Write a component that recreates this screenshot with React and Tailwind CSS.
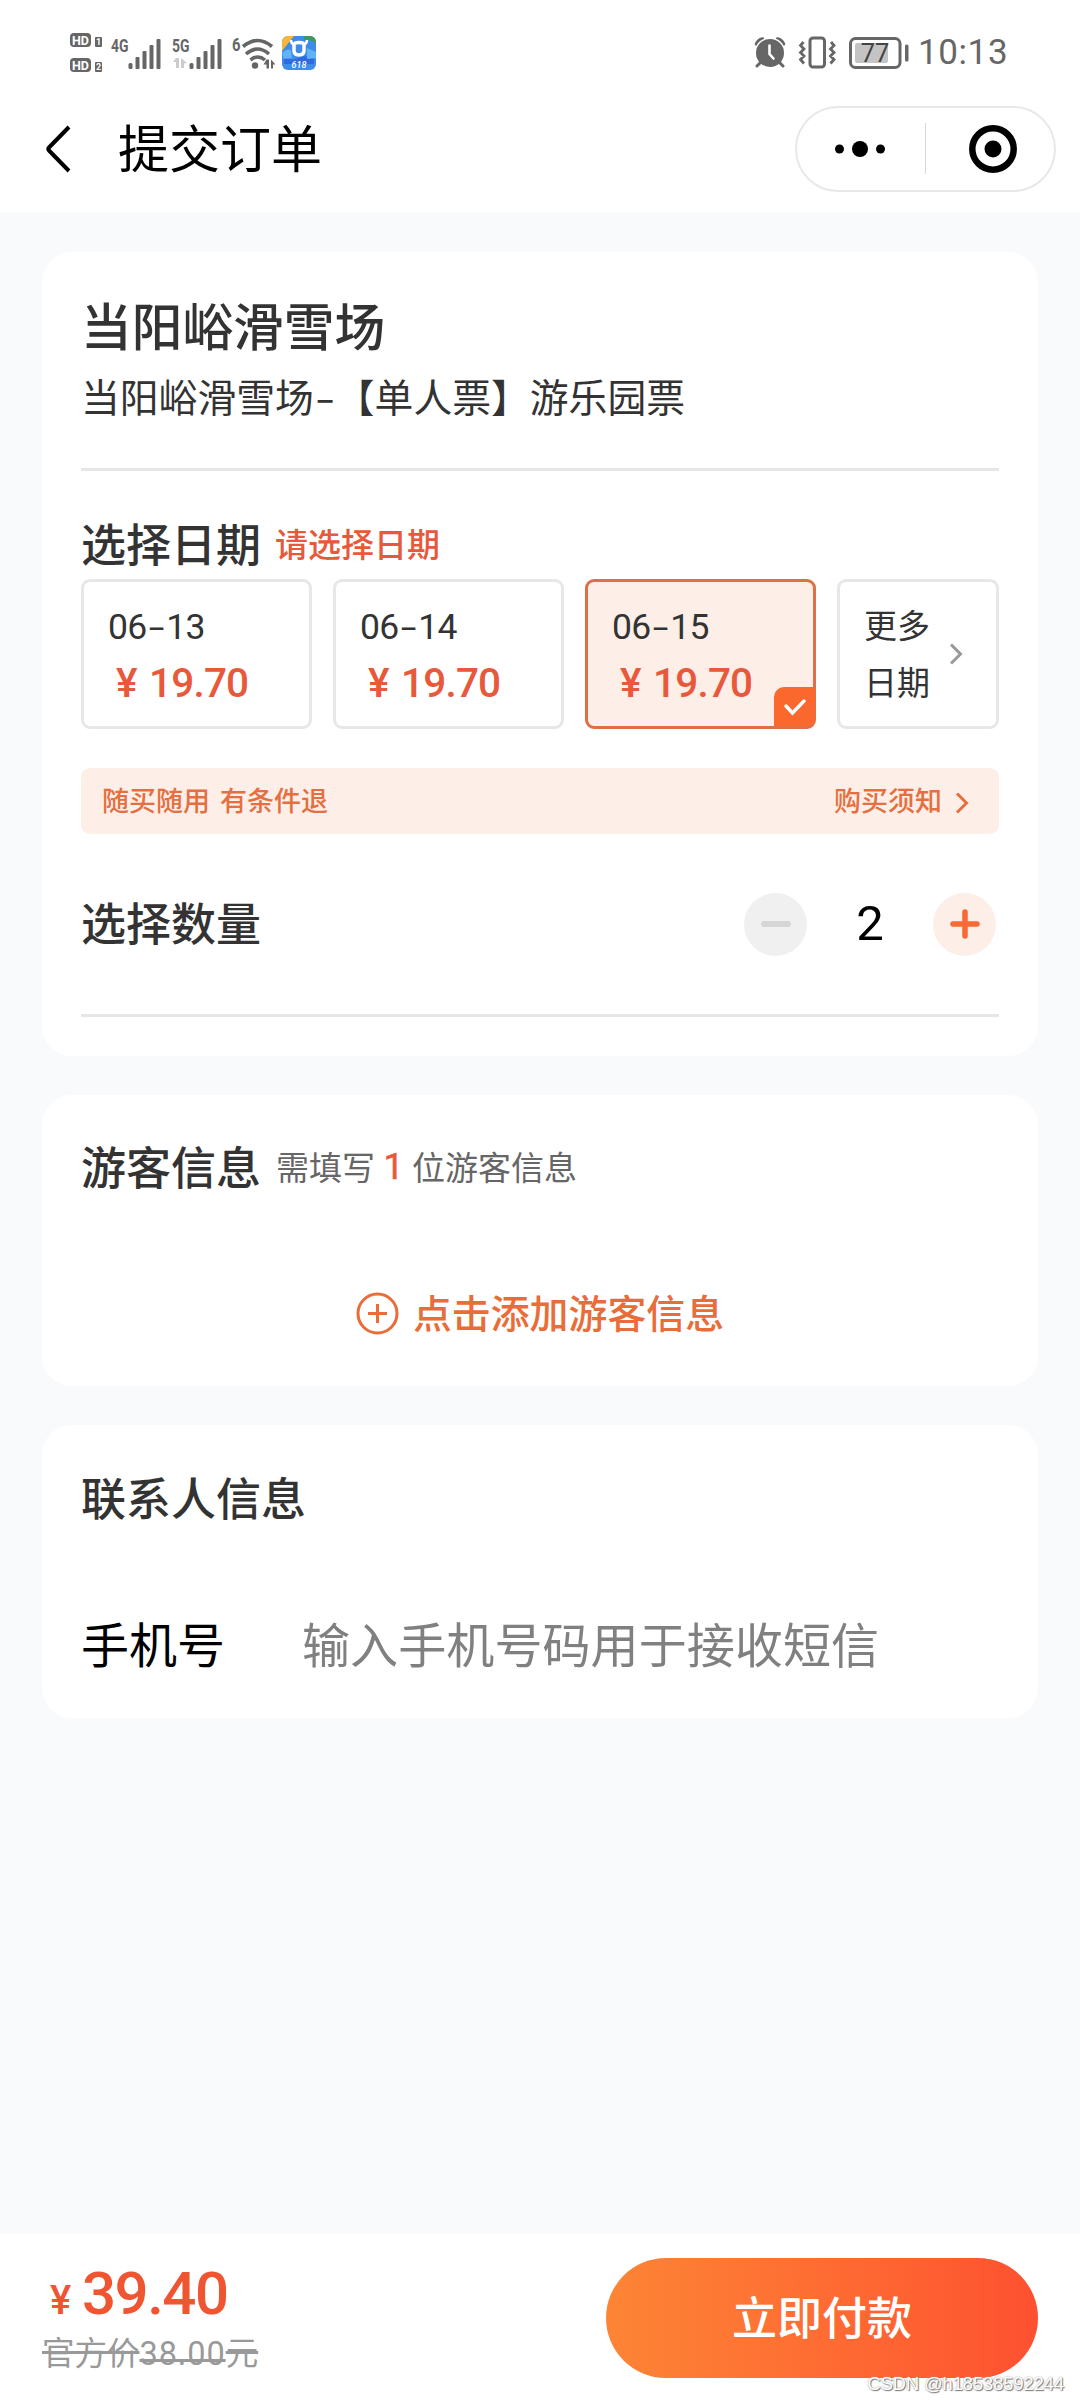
import { useState } from "react"

const dates = [
  { month: "06", day: "13", price: "19.70" },
  { month: "06", day: "14", price: "19.70" },
  { month: "06", day: "15", price: "19.70" },
]

function HdBadge({ n }) {
  return (
    <svg className="overflow-visible" width="32" height="14" viewBox="0 0 32 14">
      <rect width="21" height="14" rx="4" fill="#666" />
      <text x="10.5" y="11.5" fontSize="12.5" fontWeight="700" fill="#fff" textAnchor="middle" fontFamily="Roboto">HD</text>
      <rect x="25" y="4" width="7" height="10" rx="1" fill="#666" />
      <text x="28.5" y="12.2" fontSize="9" fontWeight="700" fill="#fff" textAnchor="middle" fontFamily="Roboto">{n}</text>
    </svg>
  )
}

function Signal({ label, arrows }) {
  return (
    <svg className="overflow-visible" width="51" height="32" viewBox="0 0 51 32" fill="#666">
      <text x="0" y="14.5" fontSize="18.5" fontWeight="700" textLength="17.5" lengthAdjust="spacingAndGlyphs" fontFamily="Roboto">{label}</text>
      {arrows && <path d="M4 21h3v10H4v-6H1zM9 21l6 5-3 .5V31H9z" fill="#ccc" />}
      <rect x="17.5" y="26" width="4" height="6" rx="1.5" />
      <rect x="24.5" y="20" width="4" height="12" rx="1" />
      <rect x="31.5" y="14" width="4" height="18" rx="1" />
      <rect x="38.5" y="8" width="4" height="24" rx="1" />
      <rect x="45.5" y="2" width="4" height="30" rx="1" />
    </svg>
  )
}

function Wifi() {
  return (
    <svg className="overflow-visible" width="44" height="34" viewBox="0 0 44 34" fill="none" stroke="#666" strokeWidth="3.6">
      <text x="0" y="14.5" fontSize="18.5" fontWeight="700" fill="#666" stroke="none" textLength="8.5" lengthAdjust="spacingAndGlyphs" fontFamily="Roboto">6</text>
      <path d="M11 10.500q14.500-12 29 0M14 18q11.500-10 23 0M18.500 24q7.500-6 14.500 0" />
      <circle cx="23" cy="29.500" r="3.200" fill="#666" stroke="none" />
      <path d="M34.500 23.500h2.500v9h-2.500v-4h-3zM39 23.500l4.500 5h-2.500v4h-2z" fill="#666" stroke="none" />
    </svg>
  )
}

function AppBadge() {
  return (
    <svg width="34" height="34" viewBox="0 0 34 34">
      <defs>
        <clipPath id="app"><rect width="34" height="34" rx="6" /></clipPath>
      </defs>
      <g clipPath="url(#app)">
        <rect width="34" height="34" fill="#3e8bea" />
        <path d="M0 0h12L0 15z" fill="#f6b63c" />
        <path d="M22 0h12v8q-6-6-12-4z" fill="#3c9a5b" />
        <path d="M2 20q6 6 14 2t16 1v5H2z" fill="#3268df" />
        <path d="M0 17q5-5 9-3l1 8-8 1zM25 12l9 4v6l-9 1z" fill="#5fb4f6" />
        <path d="M12 9q0-2.500 5-2.500t5 2.500v5.500q0 4.500-5 4.500t-5-4.500z" fill="none" stroke="#fff" strokeWidth="3.500" />
        <path d="M9 4q0 4 3 4M25 4q0 4-3 4" fill="none" stroke="#fff" strokeWidth="2.500" />
        <text x="17" y="32" fontSize="9" fontStyle="italic" fontWeight="500" fill="#fff" textAnchor="middle" fontFamily="Roboto">618</text>
      </g>
    </svg>
  )
}

function AlarmClock() {
  return (
    <svg width="32" height="31" viewBox="0 0 32 31" fill="none" stroke="#666" strokeLinecap="round">
      <path d="M2.500 7q1.500-4 6-5M23.500 2q4.500 1 6 5" strokeWidth="3.500" />
      <circle cx="16" cy="16" r="15.500" fill="#fff" stroke="none" />
      <circle cx="16" cy="16" r="14" fill="#666" stroke="none" />
      <path d="M7 25l-4 4M25 25l4 4" strokeWidth="3" />
      <path d="M15.500 8.500v8.500l4 4.500" stroke="#fff" strokeWidth="2.600" />
    </svg>
  )
}

function Vibrate() {
  return (
    <svg width="38" height="33" viewBox="0 0 38 33" fill="none" stroke="#666" strokeWidth="3">
      <rect x="12" y="2" width="14.500" height="29" rx="3" />
      <path d="M5.500 6l-3 3.500 3.500 3.500-3.500 3.500 3.500 3.500-3.500 3.500 3.500 4M33 6l3 3.500-3.500 3.500 3.500 3.500-3.500 3.500 3.500 3.500-3.500 4" strokeWidth="2.800" />
    </svg>
  )
}

function Battery() {
  return (
    <svg width="60" height="32" viewBox="0 0 60 32">
      <rect x="1.500" y="1.500" width="49.500" height="29" rx="5" fill="none" stroke="#666" strokeWidth="3" />
      <rect x="6" y="6" width="33" height="20" rx="2" fill="#c4c4c4" />
      <rect x="56" y="7.500" width="3.500" height="17" rx="1.500" fill="#666" />
      <text x="26" y="25" fontSize="25.500" fill="#444" textAnchor="middle" fontFamily="Roboto">77</text>
    </svg>
  )
}

function Chevron({ className }) {
  return (
    <svg className={className} width="14" height="22" viewBox="0 0 14 22" fill="none" stroke="currentColor" strokeWidth="3">
      <path d="M2 1.500l9.500 9.500L2 20.500" />
    </svg>
  )
}

function StatusBar() {
  return (
    <div className="flex h-[105px] items-center pl-[70px] pr-[73px]">
      <div className="flex flex-col gap-[11px]">
        <HdBadge n="1" />
        <HdBadge n="2" />
      </div>
      <div className="ml-[9px]"><Signal label="4G" /></div>
      <div className="ml-[10px]"><Signal label="5G" arrows /></div>
      <div className="ml-[9px]"><Wifi /></div>
      <div className="ml-[6px]"><AppBadge /></div>
      <div className="ml-auto flex items-center">
        <AlarmClock />
        <div className="ml-[12px]"><Vibrate /></div>
        <div className="ml-[13px]"><Battery /></div>
        <span className="ml-[9px] w-[89px] whitespace-nowrap font-['Roboto',sans-serif] text-[35px] leading-[40px] tracking-[0.6px] text-[#666]">10:13</span>
      </div>
    </div>
  )
}

function NavBar() {
  return (
    <div className="flex h-[87px] items-center pl-[44px] pr-[24px]">
      <svg width="28" height="48" viewBox="0 0 28 48" fill="none" stroke="#000" strokeWidth="4">
        <path d="M25 2L5 22.500q-1.500 1.500 0 3L25 46" />
      </svg>
      <h1 className="mb-[6px] ml-[46px] text-[51px] leading-[60px] text-black">提交订单</h1>
      <div className="ml-auto flex h-[86px] w-[261px] items-center rounded-full border-2 border-[#e8e8e8]">
        <svg className="ml-[38px]" width="50" height="16" viewBox="0 0 50 16">
          <circle cx="4.500" cy="8" r="4.500" />
          <circle cx="25" cy="8" r="8" />
          <circle cx="45.500" cy="8" r="4.500" />
        </svg>
        <div className="ml-[40px] h-[51px] w-px bg-[#d8d8d8]" />
        <svg className="ml-[43px]" width="48" height="48" viewBox="0 0 48 48">
          <circle cx="24" cy="24" r="20.700" fill="none" stroke="#000" strokeWidth="6.500" />
          <circle cx="24" cy="24" r="8.500" />
        </svg>
      </div>
    </div>
  )
}

function DateCard({ month, day, price, active, onClick }) {
  return (
    <button
      onClick={onClick}
      className={
        active
          ? "relative h-[150px] w-[231px] rounded-[9px] border-3 border-[#dd7044] bg-[#fdeee8] pl-[24px] pt-[2px] text-left"
          : "relative h-[150px] w-[231px] rounded-[9px] border-3 border-[#e7e7e7] bg-white pl-[24px] pt-[2px] text-left"
      }
    >
      <div className="font-['Roboto',sans-serif] text-[35.5px] leading-[56px] tracking-[-0.8px] text-[#333]">
        {month}
        <span className="mx-[1px] inline-block w-[18px] scale-x-160 text-center">-</span>
        {day}
      </div>
      <div className="flex pl-[8px] font-['Roboto',sans-serif] text-[40.5px] font-medium leading-[57px] tracking-[-0.8px] text-[#e8583a]">
        <span className="w-[33px]">¥</span>
        <span>{price}</span>
      </div>
      {active && (
        <div className="absolute -right-[2px] bottom-0 flex h-[39px] w-[41px] items-center justify-center rounded-br-[6px] rounded-tl-[10px] bg-[#fb682e]">
          <svg width="24" height="18" viewBox="0 0 24 18" fill="none" stroke="#fff" strokeWidth="3.500" strokeLinecap="round">
            <path d="M3 8l6.500 7L21 3" />
          </svg>
        </div>
      )}
    </button>
  )
}

export default function App() {
  const [selected, setSelected] = useState("15")
  const [count, setCount] = useState(2)

  return (
    <main className="relative flex h-[2400px] w-[1080px] flex-col bg-[#f8fafc] font-['Noto_Sans_CJK_SC',sans-serif] text-[#333]">
      <header className="h-[212px] bg-white">
        <StatusBar />
        <NavBar />
      </header>

      <div className="flex flex-col gap-[39px] px-[42px] pt-[40px]">
        {/* Ticket */}
        <section className="h-[804px] rounded-[30px] bg-white px-[39px] pt-[42px]">
          <h2 className="text-[50.7px] font-medium leading-[60px]">当阳峪滑雪场</h2>
          <p className="mt-[16px] whitespace-nowrap text-[38.8px] leading-[50px]">
            当阳峪滑雪场<span className="inline-block w-[22px] scale-x-150 text-center">-</span>【单人票】游乐园票
          </p>
          <div className="mt-[48px] h-[3px] bg-[#e6e6e6]" />

          <div className="mt-[42px] flex h-[60px] items-center">
            <h3 className="text-[45px] font-medium leading-[60px]">选择日期</h3>
            <span className="ml-[14px] text-[33px] font-medium leading-[60px] text-[#e8583a]">请选择日期</span>
          </div>
          <div className="mt-[6px] flex gap-[21px]">
            {dates.map((d) => (
              <DateCard key={d.day} {...d} active={d.day === selected} onClick={() => setSelected(d.day)} />
            ))}
            <button className="flex h-[150px] w-[162px] items-center rounded-[9px] border-3 border-[#e7e7e7] pl-[24px]">
              <span className="mb-[2px] w-[66px] text-[33px] leading-[57px]">更多日期</span>
              <Chevron className="ml-[19px] text-[#999]" />
            </button>
          </div>

          <div className="mt-[39px] flex h-[66px] items-center rounded-[9px] bg-[#fdeee8] pl-[21px] pr-[30px] text-[27px] font-medium leading-[60px] text-[#e56f3f]">
            <span className="mb-[3px] [word-spacing:4px]">随买随用 有条件退</span>
            <span className="mb-[3px] ml-auto">购买须知</span>
            <Chevron className="ml-[13px] mt-[3px]" />
          </div>

          <div className="mt-[58px] flex h-[64px] items-center">
            <h3 className="mb-[4px] text-[45px] font-medium leading-[60px]">选择数量</h3>
            <button onClick={() => setCount(Math.max(1, count - 1))} className="ml-auto flex h-[63px] w-[63px] items-center justify-center rounded-full bg-[#f0f0f0]">
              <span className="h-[6px] w-[30px] rounded-full bg-[#d6d6d6]" />
            </button>
            <span className="w-[126px] text-center font-['Roboto',sans-serif] text-[49px] leading-[60px] text-black">{count}</span>
            <button onClick={() => setCount(count + 1)} className="mr-[3px] flex h-[63px] w-[63px] items-center justify-center rounded-full bg-[#fdeee8]">
              <svg width="30" height="30" viewBox="0 0 30 30" stroke="#f66a35" strokeWidth="5.500" strokeLinecap="round">
                <path d="M3 15h24M15 3v24" />
              </svg>
            </button>
          </div>
          <div className="mt-[58px] h-[3px] bg-[#e6e6e6]" />
        </section>

        {/* Visitors */}
        <section className="h-[291px] rounded-[30px] bg-white px-[39px] pt-[41px]">
          <div className="flex h-[60px] items-center">
            <h3 className="text-[45px] font-medium leading-[60px]">游客信息</h3>
            <div className="ml-[15px] flex text-[33px] leading-[62px] text-[#666]">
              <span>需填写</span>
              <span className="w-[37px] pt-px text-center font-['Roboto',sans-serif] text-[36px] text-[#e8583a] [-webkit-text-stroke:0.5px_#e8583a]">1</span>
              <span>位游客信息</span>
            </div>
          </div>
          <button className="mx-auto mt-[85px] flex h-[60px] items-center justify-center text-[38.9px] font-medium leading-[60px] text-[#e96d38]">
            <svg className="mr-[14px] mt-[5px]" width="43" height="43" viewBox="0 0 43 43" fill="none" stroke="currentColor" strokeWidth="3">
              <circle cx="21.500" cy="21.500" r="19.500" />
              <path d="M12 21.500h19M21.500 12v19" />
            </svg>
            点击添加游客信息
          </button>
        </section>

        {/* Contact */}
        <section className="h-[293px] rounded-[30px] bg-white px-[39px] pt-[42px]">
          <h3 className="text-[45px] font-medium leading-[60px]">联系人信息</h3>
          <div className="mt-[85px] flex h-[60px] items-center">
            <label className="w-[221px] text-[48px] leading-[60px] text-black">手机号</label>
            <span className="whitespace-nowrap text-[48.1px] leading-[60px] text-[#808080]">输入手机号码用于接收短信</span>
          </div>
        </section>
      </div>

      <footer className="mt-auto flex h-[166px] bg-white pl-[42px] pr-[42px] pt-[24px]">
        <div>
          <div className="flex h-[70px] items-baseline font-['Roboto',sans-serif] font-medium leading-[72px] text-[#f05531]">
            <span className="w-[40px] pl-[8px] text-[40px]">¥</span>
            <span className="text-[60px] tracking-[-1.5px]">39.40</span>
          </div>
          <div className="flex h-[48px] items-center">
            <del className="whitespace-nowrap text-[32.5px] leading-[48px] text-[#999] decoration-3">
              官方价<span className="font-['Roboto',sans-serif] tracking-[0.9px]">38.00</span>元
            </del>
          </div>
        </div>
        <button className="ml-auto h-[120px] w-[432px] rounded-full bg-linear-to-r from-[#fd8435] to-[#fe5030] pb-[5px] text-[45px] font-medium leading-[114px] text-white">
          立即付款
        </button>
      </footer>

      <span className="absolute bottom-[4px] right-[16px] whitespace-nowrap font-['Liberation_Sans',sans-serif] text-[18.2px] leading-[24px] text-white [text-shadow:1px_1px_1px_#777,0_0_2px_#999]">
        CSDN @h18538592244
      </span>
    </main>
  )
}
